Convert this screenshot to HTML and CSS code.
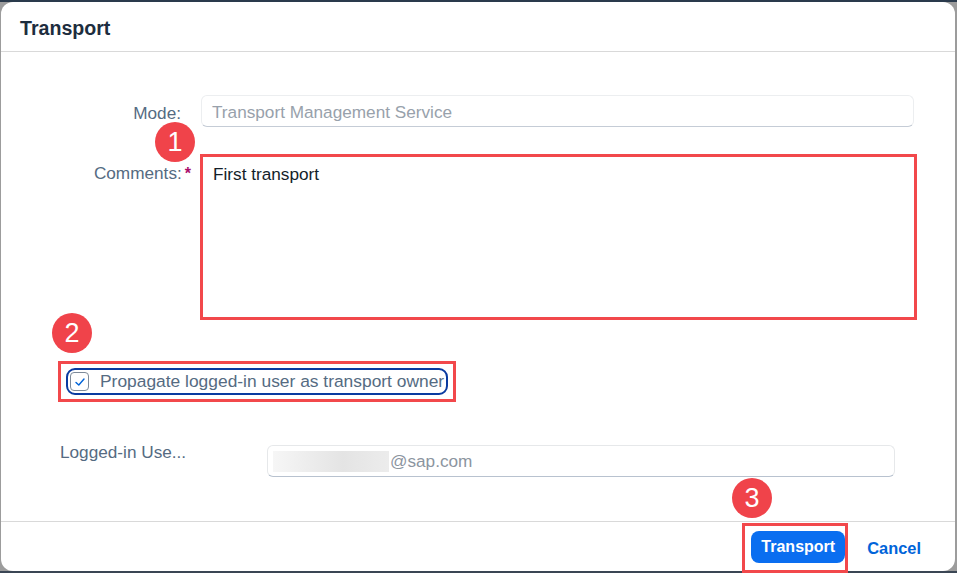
FILE: index.html
```html
<!DOCTYPE html>
<html>
<head>
<meta charset="utf-8">
<link rel="stylesheet" href="styles.css">
</head>
<body>
<div class="dialog">
  <header class="dlg-header">
    <h1 class="dlg-title">Transport</h1>
  </header>
  <main class="dlg-content">
    <div class="form-row row-mode">
      <label class="lbl">Mode:</label>
      <div class="input input-disabled">Transport Management Service</div>
    </div>
    <div class="form-row row-comments">
      <label class="lbl">Comments:<span class="req">*</span></label>
      <div class="hl hl-text">
        <div class="textarea">First transport</div>
      </div>
      <span class="badge badge-1">1</span>
    </div>
    <div class="row-check">
      <span class="badge badge-2">2</span>
      <div class="hl hl-check">
        <div class="focus">
          <span class="cb">
            <svg width="12" height="12" viewBox="0 0 12 12"><path d="M2 6.4 L4.8 9 L10 3" fill="none" stroke="#0064d9" stroke-width="1.4" stroke-linecap="round" stroke-linejoin="round"/></svg>
          </span>
          <span class="cb-text">Propagate logged-in user as transport owner</span>
        </div>
      </div>
    </div>
    <div class="row-user">
      <label class="lbl-user">Logged-in Use...</label>
      <div class="input input-user"><span class="blur"></span><span class="mail">@sap.com</span></div>
    </div>
  </main>
  <footer class="dlg-footer">
    <span class="badge badge-3">3</span>
    <div class="hl hl-btn">
      <button class="btn-primary">Transport</button>
    </div>
    <button class="btn-link">Cancel</button>
  </footer>
</div>
</body>
</html>
```

FILE: styles.css
```css
* { box-sizing: border-box; }
html, body { margin: 0; padding: 0; }
body {
  width: 957px;
  height: 573px;
  overflow: hidden;
  background: linear-gradient(to bottom, #2a3a4c 0, #2a3a4c 2px, #9c9c9c 2px, #9c9c9c 571px, #3a4654 571px);
  font-family: "Liberation Sans", Arial, sans-serif;
  padding: 2px 2px 2px 1px;
}
.dialog {
  position: relative;
  width: 954px;
  height: 569px;
  background: #fff;
  border-radius: 12px;
  display: flex;
  flex-direction: column;
  overflow: visible;
}
.dlg-header {
  height: 50px;
  border-bottom: 1px solid #d9d9d9;
  padding: 0 19px;
  display: flex;
  align-items: center;
  flex: none;
}
.dlg-title {
  margin: 0;
  font-size: 19.6px;
  font-weight: 700;
  color: #1d2d3e;
  padding-top: 3px;
}
.dlg-content {
  flex: 1;
  padding: 43px 0 0 0;
  position: relative;
}
.form-row {
  display: flex;
  align-items: flex-start;
  position: relative;
}
.lbl {
  width: 180px;
  text-align: right;
  font-size: 17.2px;
  color: #556b82;
  flex: none;
}
.req { color: #aa0d6b; font-weight: 700; margin-left: 3px; font-size: 16px; }
.row-mode .lbl { padding-top: 8px; }
.input {
  height: 32px;
  border: 1px solid #e6e8ea;
  border-bottom-color: #b8c2cf;
  border-radius: 6px;
  background: #fff;
  font-size: 17.2px;
  display: flex;
  align-items: center;
}
.input-disabled {
  margin-left: 20px;
  width: 713px;
  padding-left: 10px;
  padding-top: 2px;
  color: #98a1ab;
  border-color: #eceef0;
  border-bottom-color: #c5ccd6;
}
.row-comments { margin-top: 27px; }
.row-comments .lbl { padding-top: 9px; width: 192px; padding-right: 2px; }
.hl {
  border: 3px solid #f2484b;
}
.hl-text {
  margin-left: 7px;
  width: 717px;
  height: 166px;
}
.textarea {
  padding: 7px 10px;
  font-size: 17.2px;
  color: #131e29;
}
.badge {
  position: absolute;
  width: 40px;
  height: 40px;
  border-radius: 50%;
  background: #f0434a;
  color: #fff;
  font-size: 27px;
  line-height: 40px;
  text-align: center;
  font-family: "Liberation Sans", Arial, sans-serif;
}
.badge-1 { left: 154px; top: -32px; }
.row-check {
  position: relative;
  margin-top: 41px;
  padding-left: 57px;
}
.badge-2 { left: 51px; top: -48px; }
.hl-check {
  width: 398px;
  height: 41px;
  padding: 4px 5px;
}
.focus {
  height: 27px;
  border: 2px solid #0a3ba0;
  border-radius: 9px;
  display: flex;
  align-items: center;
  padding-left: 2px;
}
.cb {
  width: 19px;
  height: 19px;
  border: 1px solid #7d8a99;
  border-radius: 4px;
  display: flex;
  align-items: center;
  justify-content: center;
  flex: none;
}
.cb-text {
  margin-left: 11px;
  font-size: 17.4px;
  color: #556b82;
  white-space: nowrap;
}
.row-user {
  margin-top: 43px;
  display: flex;
  align-items: flex-start;
  padding-left: 59px;
}
.lbl-user {
  width: 207px;
  font-size: 17.2px;
  color: #556b82;
  margin-top: -3px;
}
.input-user {
  width: 628px;
  padding-left: 5px;
}
.blur {
  width: 116px;
  height: 21px;
  background: linear-gradient(to right, #f6f6f6, #e4e4e4 60%, #ececec);
}
.mail { color: #8c959f; margin-left: 1px; padding-top: 1px; }
.dlg-footer {
  position: relative;
  height: 50px;
  border-top: 1px solid #d9d9d9;
  flex: none;
  display: flex;
  align-items: flex-start;
  justify-content: flex-end;
  padding-right: 28px;
}
.badge-3 { left: 731px; top: -44px; }
.hl-btn {
  margin-top: 1px;
  width: 106px;
  height: 50px;
  padding: 5px 0 0 6px;
}
.btn-primary {
  width: 94px;
  height: 32px;
  border: none;
  border-radius: 8px;
  background: #0a6ef0;
  color: #fff;
  font-family: "Liberation Sans", Arial, sans-serif;
  font-size: 16px;
  font-weight: 700;
  padding: 0;
}
.btn-link {
  margin-left: 13px;
  margin-top: 13px;
  background: none;
  border: none;
  color: #0064d9;
  font-family: "Liberation Sans", Arial, sans-serif;
  font-size: 16.4px;
  font-weight: 700;
  padding: 4px 6px;
}
```
